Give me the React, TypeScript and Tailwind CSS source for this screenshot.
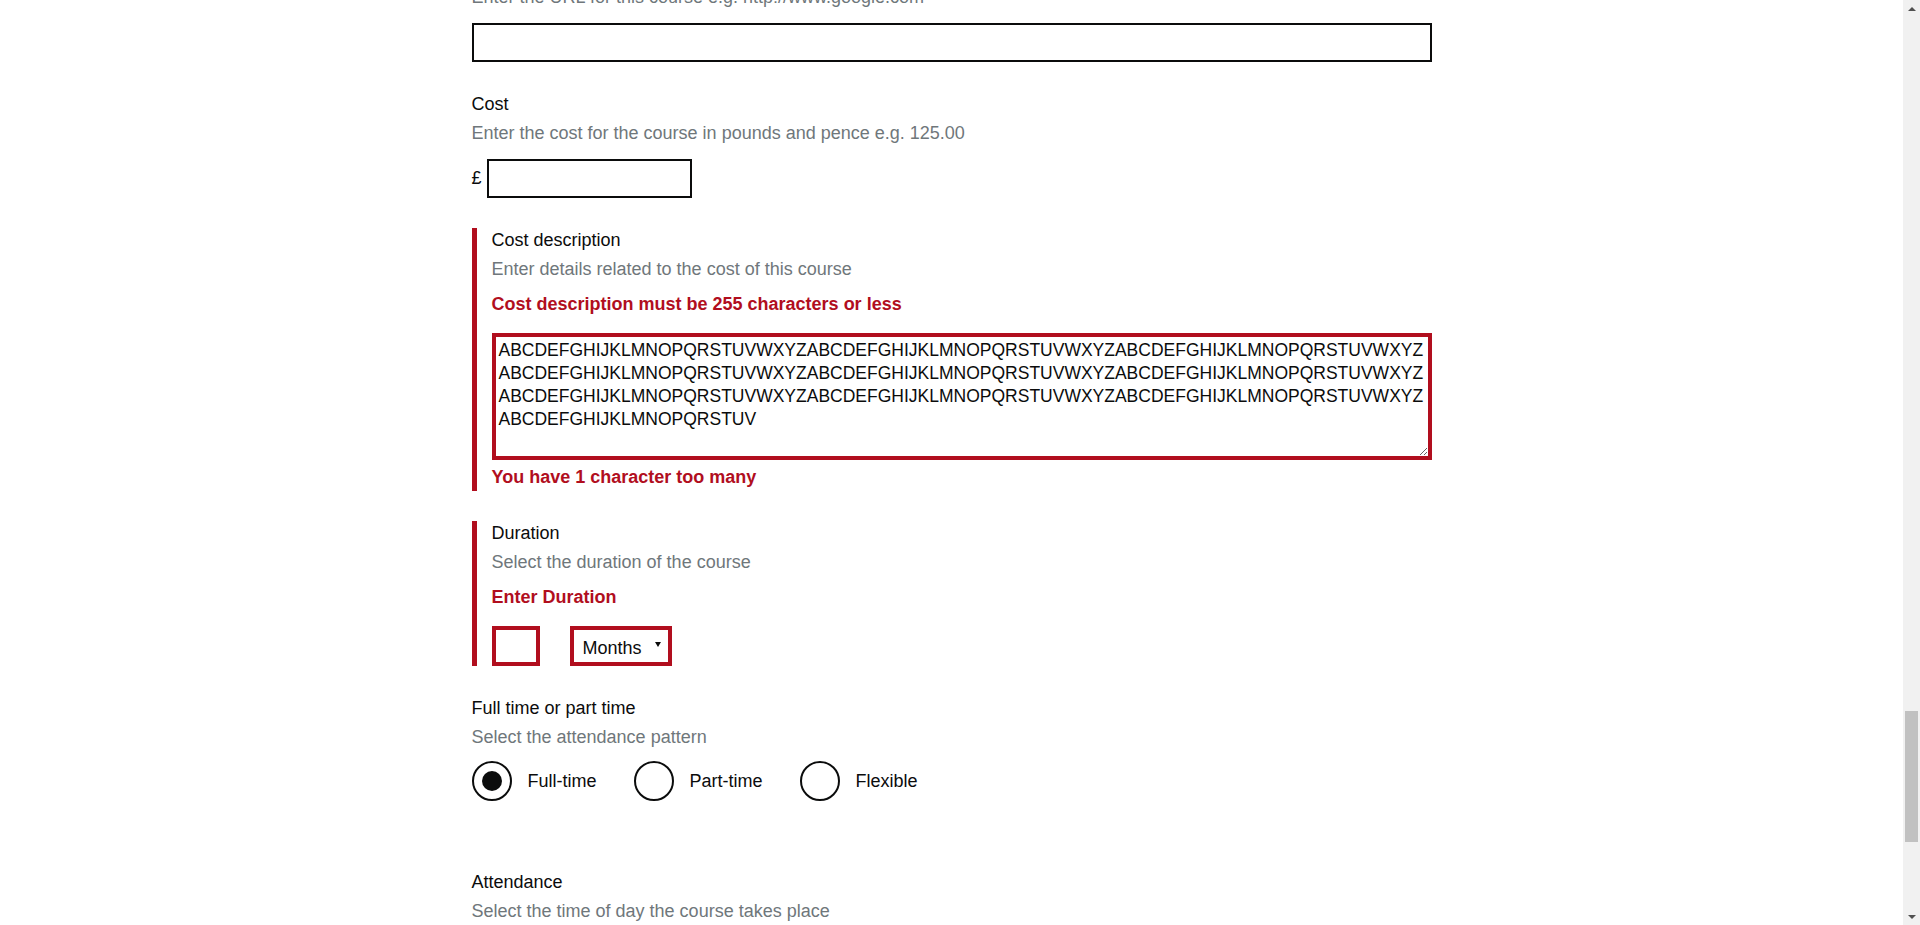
import React from 'react';

const ALPHA = 'ABCDEFGHIJKLMNOPQRSTUVWXYZ';
const costDescription = [
  ALPHA + ALPHA + ALPHA,
  ALPHA + ALPHA + ALPHA,
  ALPHA + ALPHA + ALPHA,
  'ABCDEFGHIJKLMNOPQRSTUV',
].join('\n');

function Label({ children }: { children: React.ReactNode }) {
  return <label className="block text-[18px] leading-[25px] text-[#0b0c0c]">{children}</label>;
}

function Hint({ children, className = '' }: { children: React.ReactNode; className?: string }) {
  return <span className={`block mt-[4px] text-[18px] leading-[25px] text-[#6f777b] ${className}`}>{children}</span>;
}

function ErrorMessage({ children, className = '' }: { children: React.ReactNode; className?: string }) {
  return <span className={`block text-[18px] leading-[25px] font-bold text-[#b10e1e] ${className}`}>{children}</span>;
}

function Radio({ label, checked }: { label: string; checked?: boolean }) {
  return (
    <label className="flex items-center gap-[16px] cursor-pointer">
      <span className="flex h-10 w-10 items-center justify-center rounded-full border-2 border-[#0b0c0c] bg-white">
        {checked && <span className="h-5 w-5 rounded-full bg-[#0b0c0c]" />}
      </span>
      <span className="text-[18px] leading-[25px] text-[#0b0c0c]">{label}</span>
    </label>
  );
}

export default function App() {
  return (
    <div className="flex h-[925px] w-full overflow-hidden bg-white font-['Liberation_Sans',Arial,sans-serif] text-[#0b0c0c]">
      <main className="flex-1 overflow-hidden">
        <form className="mx-auto w-[960px] mt-[-15px]">
          {/* Course URL (page scrolled past the label) */}
          <div className="mb-[30px]">
            <span className="block text-[18px] leading-[25px] text-[#6f777b]">
              Enter the URL for this course e.g. http://www.google.com
            </span>
            <input
              type="text"
              className="mt-[13px] block h-[39px] w-full border-2 border-[#0b0c0c] px-[4px] text-[18px] outline-none"
            />
          </div>

          {/* Cost */}
          <div className="mb-[30px]">
            <Label>Cost</Label>
            <Hint>Enter the cost for the course in pounds and pence e.g. 125.00</Hint>
            <div className="mt-[13px] flex items-center gap-[5px]">
              <span className="text-[18px] leading-[25px]">£</span>
              <input
                type="text"
                className="h-[39px] w-[205px] border-2 border-[#0b0c0c] px-[4px] text-[18px] outline-none"
              />
            </div>
          </div>

          {/* Cost description - error */}
          <div className="mb-[30px] border-l-[5px] border-[#b10e1e] pl-[15px] pb-[1px]">
            <Label>Cost description</Label>
            <Hint>Enter details related to the cost of this course</Hint>
            <ErrorMessage className="mt-[10px]">Cost description must be 255 characters or less</ErrorMessage>
            <textarea
              rows={5}
              defaultValue={costDescription}
              className="mt-[16px] block h-[127px] w-full resize-y border-4 border-[#b10e1e] px-[3px] py-[2px] text-[17.5px] leading-[23px] text-[#0b0c0c] outline-none"
            />
            <ErrorMessage className="mt-[5px]">You have 1 character too many</ErrorMessage>
          </div>

          {/* Duration - error */}
          <div className="mb-[30px] border-l-[5px] border-[#b10e1e] pl-[15px]">
            <Label>Duration</Label>
            <Hint>Select the duration of the course</Hint>
            <ErrorMessage className="mt-[10px]">Enter Duration</ErrorMessage>
            <div className="mt-[16px] flex gap-[30px]">
              <input
                type="text"
                className="h-[40px] w-[48px] border-4 border-[#b10e1e] px-[4px] text-[18px] outline-none"
              />
              <div className="relative">
                <select
                  defaultValue="months"
                  className="h-[40px] w-[102px] appearance-none border-4 border-[#b10e1e] bg-white pl-[9px] pt-[4px] text-[18px] text-[#0b0c0c] outline-none"
                >
                  <option value="weeks">Weeks</option>
                  <option value="months">Months</option>
                  <option value="years">Years</option>
                </select>
                <svg className="pointer-events-none absolute right-[11px] top-[16px]" width="6" height="5" viewBox="0 0 6 5">
                  <path d="M0 0h6L3 5z" fill="#0b0c0c" />
                </svg>
              </div>
            </div>
          </div>

          {/* Full time or part time */}
          <fieldset className="mb-[69px]">
            <Label>Full time or part time</Label>
            <Hint>Select the attendance pattern</Hint>
            <div className="mt-[11px] flex gap-[37px]">
              <Radio label="Full-time" checked />
              <Radio label="Part-time" />
              <Radio label="Flexible" />
            </div>
          </fieldset>

          {/* Attendance */}
          <div>
            <Label>Attendance</Label>
            <Hint>Select the time of day the course takes place</Hint>
          </div>
        </form>
      </main>

      {/* Browser scrollbar */}
      <div className="flex w-[17px] flex-col items-center bg-[#f1f1f1]">
        <div className="flex h-[17px] w-full items-center justify-center">
          <svg width="8" height="4" viewBox="0 0 8 4">
            <path d="M0 4L4 0l4 4z" fill="#505050" />
          </svg>
        </div>
        <div className="mt-[694px] h-[131px] w-[13px] bg-[#c1c1c1]" />
        <div className="flex-1" />
        <div className="flex h-[17px] w-full items-center justify-center">
          <svg width="8" height="4" viewBox="0 0 8 4">
            <path d="M0 0h8L4 4z" fill="#505050" />
          </svg>
        </div>
      </div>
    </div>
  );
}
